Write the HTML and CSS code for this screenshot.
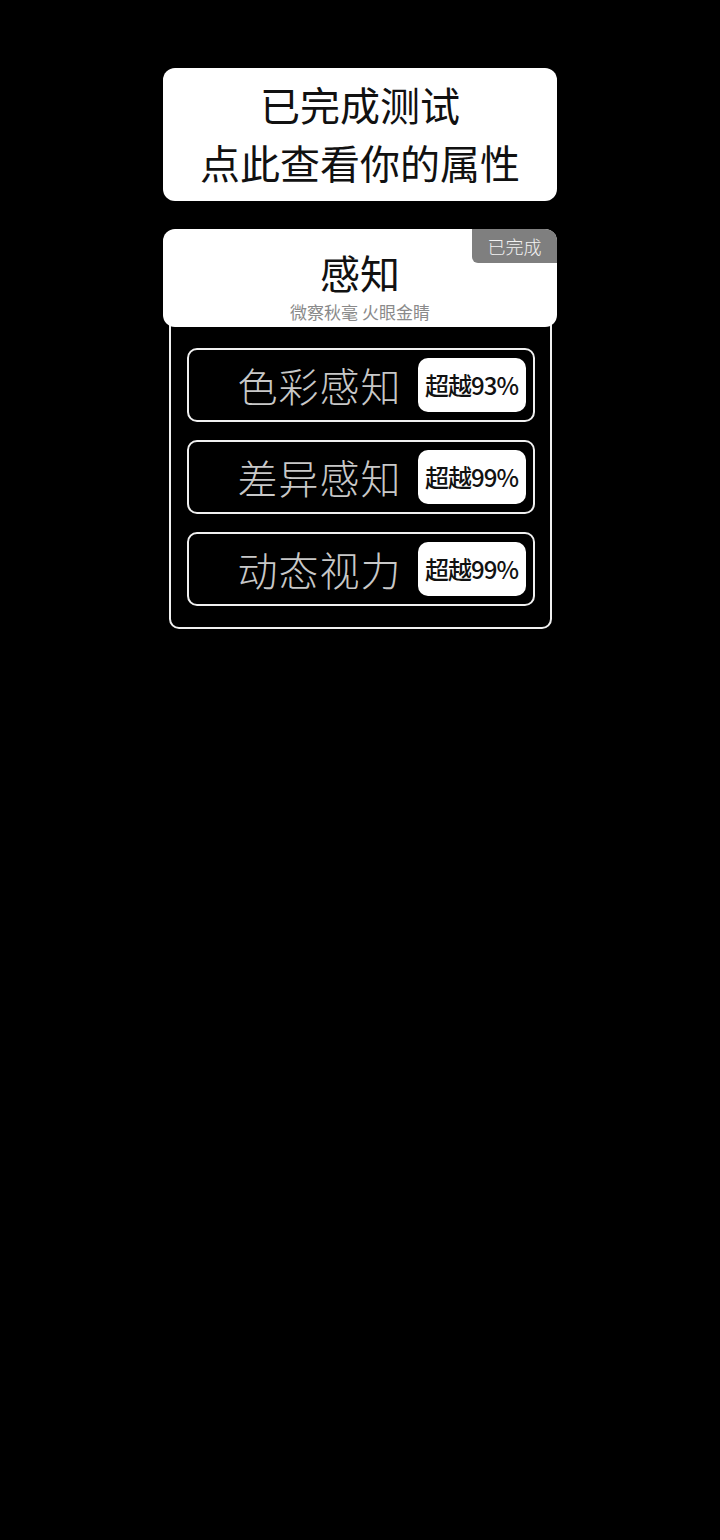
FILE: index.html
```html
<!DOCTYPE html>
<html>
<head>
  <meta charset="utf-8">
  <title>属性测试</title>
  <link rel="stylesheet" href="styles.css">
</head>
<body>

  <div class="page">

    <!-- Result Button -->
    <div class="result-card">
      <div class="result-line">已完成测试</div>
      <div class="result-line">点此查看你的属性</div>
    </div>

    <!-- Category Header -->
    <div class="category-card">
      <div class="done-tag">已完成</div>
      <div class="category-title">感知</div>
      <div class="category-sub">微察秋毫 火眼金睛</div>
    </div>

    <!-- Items -->
    <div class="item-box">
      <div class="item-row">
        <div class="item-name">色彩感知</div>
        <div class="item-score">超越93%</div>
      </div>
      <div class="item-row">
        <div class="item-name">差异感知</div>
        <div class="item-score">超越99%</div>
      </div>
      <div class="item-row">
        <div class="item-name">动态视力</div>
        <div class="item-score">超越99%</div>
      </div>
    </div>

  </div>

</body>
</html>
```

FILE: styles.css
```css
body {
  margin: 0;
  padding: 0;
  background-color: #000;
  font-family: 'Noto Sans CJK SC', 'Noto Sans', sans-serif;
  height: 1540px;
}

.page {
  width: 394px;
  margin: 0 auto;
  padding-top: 68px;
  display: flex;
  flex-direction: column;
  align-items: center;
}

/* Result Button */
.result-card {
  width: 100%;
  height: 133px;
  box-sizing: border-box;
  background-color: #fff;
  border-radius: 12px;
  display: flex;
  flex-direction: column;
  justify-content: center;
  align-items: center;
  padding-bottom: 3px;
}

.result-line {
  font-size: 40px;
  line-height: 58px;
  color: #111;
}

/* Category Header */
.category-card {
  position: relative;
  z-index: 1;
  width: 100%;
  height: 98px;
  box-sizing: border-box;
  margin-top: 28px;
  background-color: #fff;
  border-radius: 12px;
  text-align: center;
  padding-top: 19px;
}

.done-tag {
  position: absolute;
  top: 0;
  right: 0;
  width: 85px;
  height: 34px;
  line-height: 34px;
  background-color: #7f7f7f;
  color: #f2f2f2;
  font-size: 18px;
  font-weight: 300;
  border-radius: 0 12px 0 6px;
}

.category-title {
  font-size: 40px;
  line-height: 48px;
  color: #111;
}

.category-sub {
  margin-top: 4px;
  font-size: 17px;
  line-height: 24px;
  color: #8a8a8a;
}

/* Items */
.item-box {
  width: 383px;
  box-sizing: border-box;
  margin-top: -20px;
  padding: 39px 15px 21px 16px;
  border: 2px solid #f0f0f0;
  border-radius: 10px;
  display: flex;
  flex-direction: column;
  gap: 18px;
}

.item-row {
  height: 74px;
  box-sizing: border-box;
  border: 2px solid #f0f0f0;
  border-radius: 10px;
  display: flex;
  align-items: center;
  justify-content: flex-end;
  padding-right: 7px;
}

.item-name {
  font-size: 40px;
  font-weight: 300;
  letter-spacing: 1px;
  color: #c8c8c8;
  margin-right: 16px;
  line-height: 54px;
}

.item-score {
  width: 108px;
  height: 54px;
  background-color: #fff;
  border-radius: 10px;
  color: #111;
  font-size: 24px;
  font-weight: 500;
  letter-spacing: -1px;
  line-height: 54px;
  text-align: center;
}
```
